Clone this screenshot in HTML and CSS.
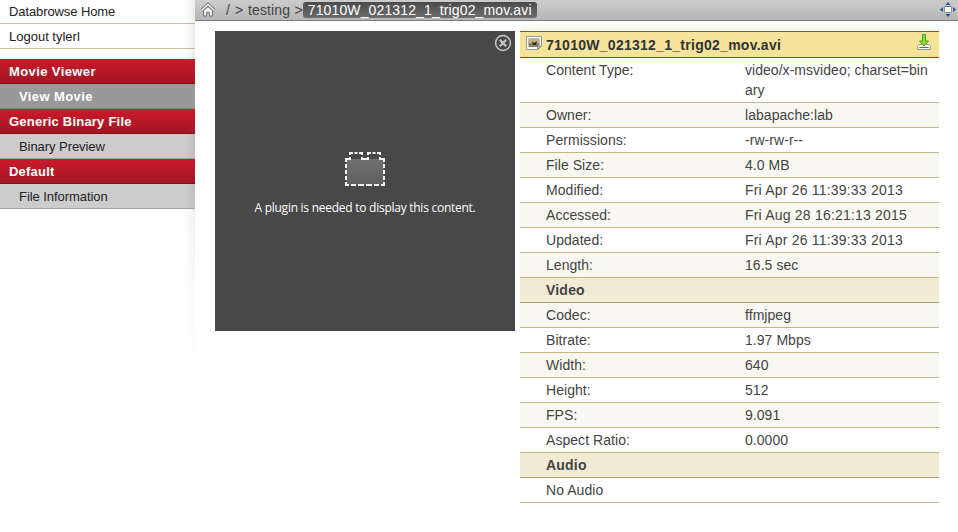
FILE: index.html
```html
<!DOCTYPE html>
<html lang="en">
<head>
<meta charset="utf-8">
<title>71010W_021312_1_trig02_mov.avi</title>
<link rel="stylesheet" href="styles.css">
</head>
<body>
<div class="page">
  <nav class="sidebar">
    <ul class="links">
      <li>Databrowse Home</li>
      <li>Logout tylerl</li>
    </ul>
    <ul class="menu">
      <li class="group wide"><span>Movie Viewer</span></li>
      <li class="item active wide"><span>View Movie</span></li>
      <li class="group"><span>Generic Binary File</span></li>
      <li class="item"><span>Binary Preview</span></li>
      <li class="group"><span>Default</span></li>
      <li class="item"><span>File Information</span></li>
    </ul>
  </nav>
  <main class="main">
    <header class="topbar">
      <svg class="home" width="16" height="16" viewBox="0 0 16 16">
        <path d="M3.500 8.500v5.500h3v-3.500h3v3.500h3V8.500L8 4.500z" fill="#eee" stroke="#777" stroke-width="1"/>
        <path d="M1.500 8.500L8 2.500L14.500 8.500" fill="none" stroke="#777" stroke-width="3.200"/>
        <path d="M1.500 8.500L8 2.500L14.500 8.500" fill="none" stroke="#f4f4f4" stroke-width="1.300"/>
      </svg>
      <div class="crumbs"><span class="root">/</span><span class="sep">&gt;</span><span class="dir">testing</span><span class="sep2">&gt;</span><span class="current">71010W_021312_1_trig02_mov.avi</span></div>
      <svg class="expand" width="16" height="16" viewBox="0 0 16 16">
        <path d="M8 1l2.500 3h-5zM8 16l2.500-3h-5zM0 8.500l3-2.500v5zM16 8.500l-3-2.500v5z" fill="#2a5596"/>
        <rect x="4.500" y="5.500" width="7" height="6" rx="1" fill="#f8f8f8" stroke="#8b8b83"/>
        <path d="M5 5.500h6" stroke="#6e6e68"/>
      </svg>
    </header>
    <div class="content">
      <section class="plugin">
        <svg class="close" width="18" height="18" viewBox="0 0 18 18">
          <circle cx="9" cy="9" r="7.400" fill="none" stroke="#c8c8c8" stroke-width="1.500"/>
          <path d="M5.800 5.800l6.400 6.400M12.200 5.800l-6.400 6.400" stroke="#c8c8c8" stroke-width="2.200"/>
        </svg>
        <svg class="brick" width="46" height="42" viewBox="0 0 46 42">
          <defs><linearGradient id="brick" x2="0" y2="1"><stop offset="0" stop-color="#707070"/><stop offset="1" stop-color="#5f5f5f"/></linearGradient></defs>
          <path d="M4 9h38v26H4z" fill="url(#brick)"/>
          <g fill="none" stroke="#f2f2f2" stroke-width="2">
            <path d="M7 35H4v-3M39 35h3v-3M4 12V9h4V7M42 12V9h-4V7"/>
            <path d="M8 5V3h3M17 3h3v2M20 7v2h6V7M26 5V3h3M35 3h3v2"/>
            <path d="M12.500 3h3M30.500 3h3"/>
            <path d="M4 14v4M4 20v4M4 26v4M42 14v4M42 20v4M42 26v4"/>
            <path d="M9 35h5M16 35h6M24 35h6M32 35h5"/>
          </g>
        </svg>
        <p>A plugin is needed to display this content.</p>
      </section>
      <table class="info">
        <colgroup><col class="label"><col></colgroup>
        <thead><tr><th colspan="2"><div class="title">
          <svg class="picture" width="16" height="16" viewBox="0 0 16 16">
            <path d="M.5 .5h15v9.500l-4 3.500H.5z" fill="#fafafa" stroke="#999"/>
            <path d="M2.500 2.500h11v6l-2 2.500h-9z" fill="#8b8061"/>
            <path d="M3 3h10v4H3z" fill="#c3b088"/>
            <path d="M6 5l2 2 3-2-1 4H7z" fill="#312b20"/>
            <path d="M11.500 13.500v-3.500h4z" fill="#c4c8cc" stroke="#888"/>
          </svg><span>71010W_021312_1_trig02_mov.avi</span>
          <svg class="download" width="14" height="17" viewBox="0 0 14 17">
            <path d="M2 10.500h10l1.500 2v3H.5v-3z" fill="#f4f4f4" stroke="#999"/>
            <path d="M2.500 13.500h9" stroke="#666"/>
            <path d="M5.500 .5h3v6.500h3L7 12 2.500 7h3z" fill="#8ddc3a" stroke="#48a31a"/>
          </svg>
        </div></th></tr></thead>
        <tbody>
          <tr><td>Content Type:</td><td class="mime">video/x-msvideo; charset=binary</td></tr>
          <tr class="odd"><td>Owner:</td><td>labapache:lab</td></tr>
          <tr><td>Permissions:</td><td>-rw-rw-r--</td></tr>
          <tr class="odd"><td>File Size:</td><td>4.0 MB</td></tr>
          <tr class="date"><td>Modified:</td><td>Fri Apr 26 11:39:33 2013</td></tr>
          <tr class="odd date"><td>Accessed:</td><td>Fri Aug 28 16:21:13 2015</td></tr>
          <tr class="date"><td>Updated:</td><td>Fri Apr 26 11:39:33 2013</td></tr>
          <tr class="odd"><td>Length:</td><td>16.5 sec</td></tr>
          <tr class="section"><td colspan="2">Video</td></tr>
          <tr class="odd"><td>Codec:</td><td>ffmjpeg</td></tr>
          <tr><td>Bitrate:</td><td>1.97 Mbps</td></tr>
          <tr class="odd"><td>Width:</td><td>640</td></tr>
          <tr><td>Height:</td><td>512</td></tr>
          <tr class="odd"><td>FPS:</td><td>9.091</td></tr>
          <tr><td>Aspect Ratio:</td><td>0.0000</td></tr>
          <tr class="section"><td colspan="2">Audio</td></tr>
          <tr><td colspan="2">No Audio</td></tr>
        </tbody>
      </table>
    </div>
  </main>
</div>
</body>
</html>
```
FILE: styles.css
```css
* { box-sizing: border-box; }
body { margin: 0; background: #fff; font-family: "Liberation Sans", Arial, sans-serif; color: #444; overflow: hidden; }
ul { list-style: none; margin: 0; padding: 0; }
svg { display: block; flex: none; }
.page { display: flex; height: 532px; }

.sidebar { position: relative; width: 195px; flex: none; font-size: 13px; line-height: 26px; color: #222; }
.sidebar::after {
  content: ""; position: absolute; top: 0; right: 0; width: 11px; height: 370px;
  background: linear-gradient(to right, rgba(110, 105, 75, 0), rgba(110, 105, 75, .13));
  -webkit-mask-image: linear-gradient(#000 40%, transparent);
  mask-image: linear-gradient(#000 40%, transparent);
}
.links { margin-bottom: 10px; }
.links li { height: 25px; padding-left: 9px; border-bottom: 1px solid #c9c3a3; }
.links li:first-child { height: 24px; line-height: 24px; letter-spacing: -.1px; }
.menu li { height: 25px; padding-left: 9px; }
.menu .group { position: relative; z-index: 1; background: linear-gradient(#cb1a2b, #a31621); border-bottom: 1px solid #850f19; color: #fff; font-weight: bold; letter-spacing: .22px; }
.menu .item { padding-left: 19px; background: #ccc; border-bottom: 1px solid #a3a3a3; letter-spacing: -.06px; }
.menu .active { position: relative; z-index: 1; background: #999; border-bottom-color: #808080; color: #fff; font-weight: bold; }
.menu .wide { letter-spacing: .4px; }

.main { flex: 1; min-width: 0; }
.topbar { display: flex; align-items: center; height: 21px; padding: 0 2px 0 5px; background: linear-gradient(#ccc, #b5b5b5); border-bottom: 1px solid #7d7d7d; font-size: 14px; line-height: 16px; }
.crumbs { display: flex; flex: 1; align-items: center; margin-left: 10px; }
.sep { margin-left: 5px; }
.dir { margin-left: 5px; letter-spacing: .1px; }
.sep2 { margin-left: 4.500px; }
.current { height: 16px; padding: 0 5px; border-radius: 3px; background: linear-gradient(#4b4b4b, #6d6d6d); color: #fff; letter-spacing: .13px; }
.expand { margin-top: -2px; }

.content { display: flex; align-items: flex-start; gap: 5px; padding: 10px 19px 0 20px; }
.plugin { position: relative; display: flex; flex-direction: column; align-items: center; flex: none; width: 300px; height: 300px; padding-top: 119px; background: #484848; }
.close { position: absolute; top: 3px; right: 3px; }
.plugin p { margin: 8px 0 0; font: 12px/16px "Open Sans", sans-serif; letter-spacing: -.26px; color: #fff; white-space: nowrap; }

.info { width: 419px; table-layout: fixed; border-collapse: separate; border-spacing: 0; font-size: 14px; line-height: 20px; }
.label { width: 199px; }
.info td { padding: 2px 10px 2px 26px; border-bottom: 1px solid #c1b789; vertical-align: top; letter-spacing: .05px; }
.info td + td { word-break: break-all; }
.info .mime { letter-spacing: .04px; }
.info .date td + td { letter-spacing: .2px; }
.info th { height: 27px; padding: 0; background: #f5e399; border-top: 1px solid #c93a05; border-bottom: 1px solid #c93a05; text-align: left; color: #333; }
.title { display: flex; align-items: center; height: 25px; padding: 0 8px 0 6px; letter-spacing: .27px; }
.title span { flex: 1; margin-left: 4px; }
.picture { margin-top: -2px; }
.download { margin-top: -4px; }
.odd td { background: #f8f8f1; }
.info .section td { background: #f2ebd3; border-bottom-color: #aea176; font-weight: bold; letter-spacing: .2px; }
```
